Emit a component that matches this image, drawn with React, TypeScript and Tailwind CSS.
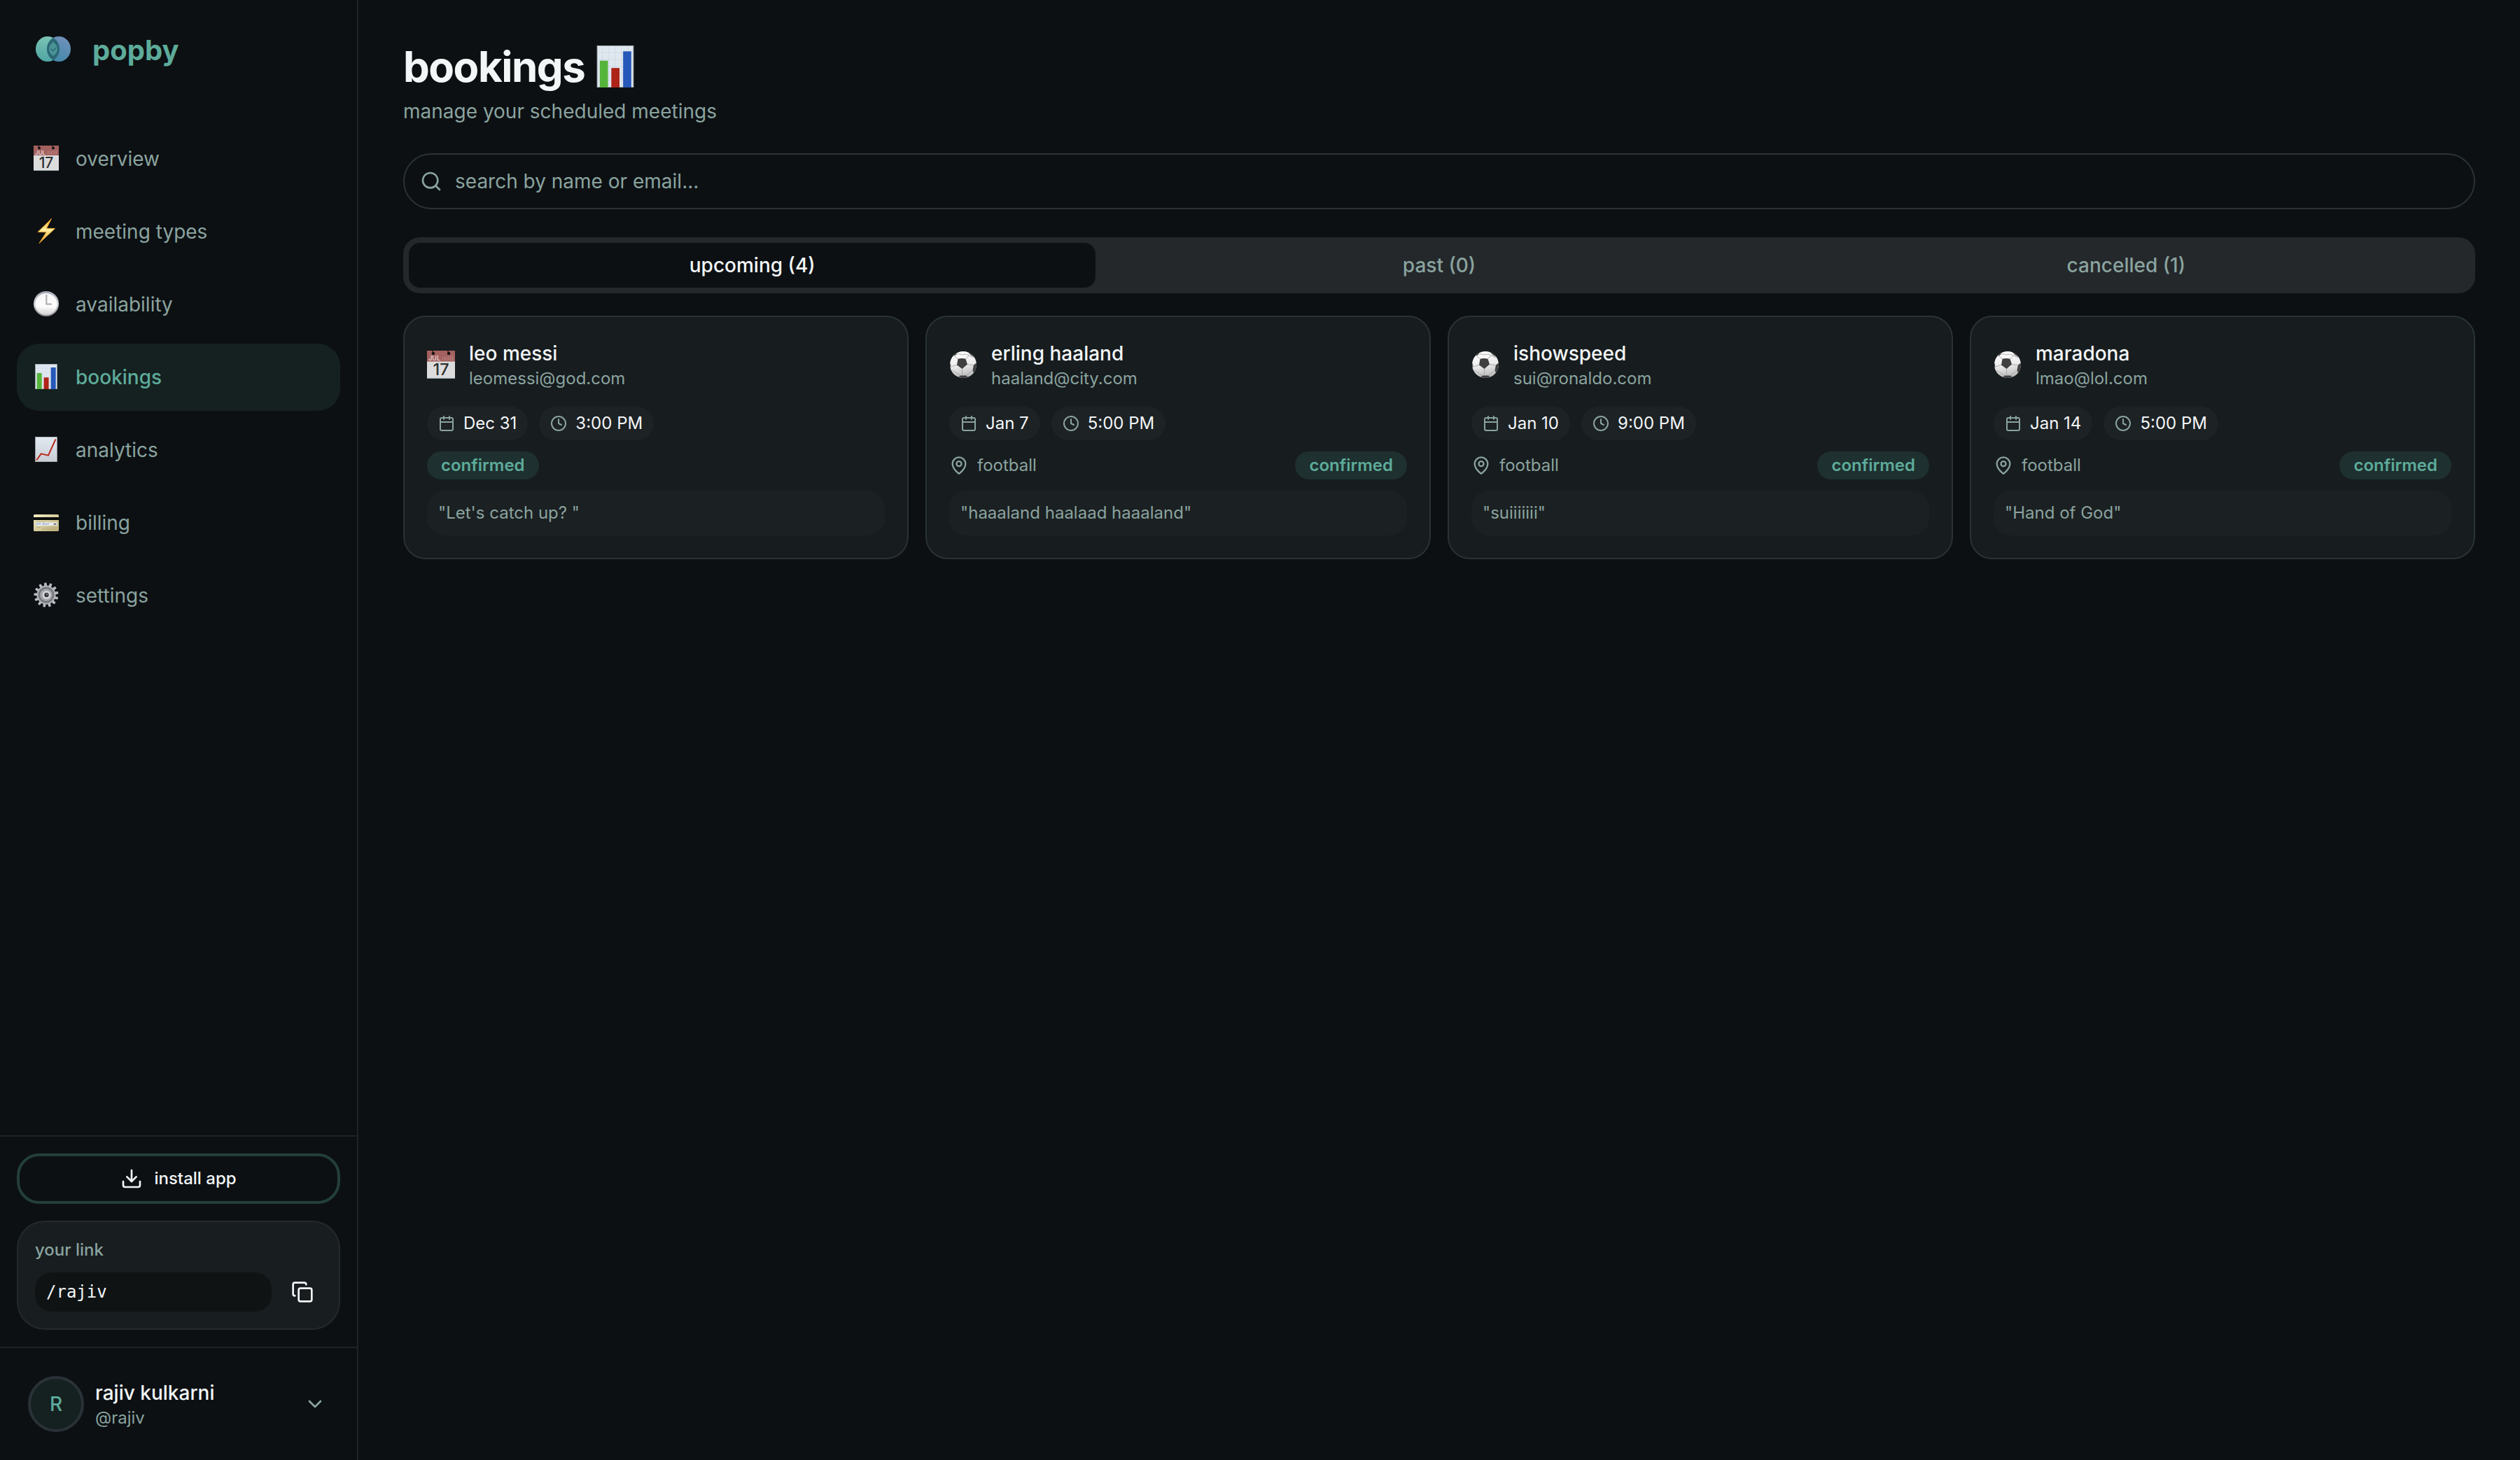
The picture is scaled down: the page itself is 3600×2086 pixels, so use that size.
import { useState } from "react";
import type { ReactNode } from "react";
import { Calendar, ChevronDown, Clock, Copy, Download, MapPin, Search } from "lucide-react";

type Status = "upcoming" | "past" | "cancelled";

interface Booking {
  name: string;
  email: string;
  icon: "calendar" | "football";
  date: string;
  time: string;
  location?: string;
  note: string;
  status: Status;
}

const bookings: Booking[] = [
  {
    name: "leo messi",
    email: "leomessi@god.com",
    icon: "calendar",
    date: "Dec 31",
    time: "3:00 PM",
    note: "Let's catch up? ",
    status: "upcoming",
  },
  {
    name: "erling haaland",
    email: "haaland@city.com",
    icon: "football",
    date: "Jan 7",
    time: "5:00 PM",
    location: "football",
    note: "haaaland haalaad haaaland",
    status: "upcoming",
  },
  {
    name: "ishowspeed",
    email: "sui@ronaldo.com",
    icon: "football",
    date: "Jan 10",
    time: "9:00 PM",
    location: "football",
    note: "suiiiiiii",
    status: "upcoming",
  },
  {
    name: "maradona",
    email: "lmao@lol.com",
    icon: "football",
    date: "Jan 14",
    time: "5:00 PM",
    location: "football",
    note: "Hand of God",
    status: "upcoming",
  },
];

const tabs: { id: Status; count: number }[] = [
  { id: "upcoming", count: 4 },
  { id: "past", count: 0 },
  { id: "cancelled", count: 1 },
];

function Logo() {
  return (
    <svg viewBox="0 0 56 56" className="size-14" aria-hidden="true">
      <defs>
        <linearGradient id="logoLeft" x1="0.5" y1="0" x2="0.4" y2="1">
          <stop offset="0" stopColor="#7cc4b6" />
          <stop offset="1" stopColor="#4fa5a3" />
        </linearGradient>
        <linearGradient id="logoRight" x1="0.8" y1="0" x2="0.4" y2="1">
          <stop offset="0" stopColor="#7391bb" />
          <stop offset="1" stopColor="#4389a9" />
        </linearGradient>
        <clipPath id="logoClip">
          <ellipse cx="20" cy="26" rx="17" ry="18" />
        </clipPath>
      </defs>
      <ellipse cx="20" cy="26" rx="17" ry="18" fill="url(#logoLeft)" />
      <ellipse cx="36" cy="26" rx="17" ry="18" fill="url(#logoRight)" />
      <ellipse cx="36" cy="26" rx="17" ry="18" fill="#2b6874" clipPath="url(#logoClip)" />
      <path d="M28 16c4 3 6 6.500 6 10s-2 7-6 10c-4-3-6-6.500-6-10s2-7 6-10z" fill="#4a9496" />
      <path d="m24.800 26 2.700 2.800 4.500-4.600" fill="none" stroke="#2a6470" strokeWidth="1.300" strokeLinecap="round" />
    </svg>
  );
}

function CalendarEmoji() {
  return (
    <svg viewBox="0 0 36 36" className="size-full" aria-hidden="true">
      <rect width="36" height="36" fill="#dcdcdc" />
      <rect width="36" height="14" fill="#a3615f" />
      <rect y="35" width="36" height="1" fill="#9db0ad" />
      <circle cx="8" cy="3.500" r="2" fill="#161213" />
      <circle cx="28" cy="3.500" r="2" fill="#161213" />
      <path d="M8 3 7 0M28 3l-1.500-3" stroke="#161213" strokeWidth="1" />
      <text x="2" y="12.500" fontSize="8" fontWeight="600" fill="#e3cfce" fontFamily="Inter, sans-serif">
        JUL
      </text>
      <path
        d="M20.500 8v4.500M23 7.500v5M25.500 8v4.500M28 7.500v5M30.500 7v5.500M33 6.500v6"
        stroke="#b98483"
        strokeWidth="1"
      />
      <text x="18" y="31.500" fontSize="21" textAnchor="middle" fontWeight="500" fill="#2f302f" fontFamily="Inter, sans-serif">
        17
      </text>
    </svg>
  );
}

function BoltEmoji() {
  return (
    <svg viewBox="0 0 36 36" className="size-full" aria-hidden="true">
      <defs>
        <linearGradient id="bolt" x1="0.5" y1="0" x2="0.5" y2="1">
          <stop offset="0" stopColor="#f3a92c" />
          <stop offset="0.45" stopColor="#fff0a0" />
          <stop offset="1" stopColor="#e8961f" />
        </linearGradient>
      </defs>
      <path d="M25.500.500 6 19.500l12.200.2L8 35.500 30.500 14.500l-12-.2z" fill="url(#bolt)" stroke="#e9a02c" strokeWidth="1" />
    </svg>
  );
}

function ClockEmoji() {
  return (
    <svg viewBox="0 0 36 36" className="size-full" aria-hidden="true">
      <defs>
        <linearGradient id="clockRim" x1="0" y1="0" x2="0" y2="1">
          <stop offset="0" stopColor="#a3a6b4" />
          <stop offset="0.5" stopColor="#d5d6dc" />
          <stop offset="1" stopColor="#8d8d91" />
        </linearGradient>
        <linearGradient id="clockFace" x1="0" y1="0" x2="0" y2="1">
          <stop offset="0" stopColor="#f6f6f7" />
          <stop offset="0.6" stopColor="#fdfdfd" />
          <stop offset="1" stopColor="#d2d2d4" />
        </linearGradient>
      </defs>
      <circle cx="18" cy="18" r="18" fill="url(#clockRim)" />
      <circle cx="18" cy="18.500" r="15.500" fill="url(#clockFace)" />
      <path d="M18.300 5v13.500H26" fill="none" stroke="#ababae" strokeWidth="2" />
    </svg>
  );
}

function BarsEmoji() {
  return (
    <svg viewBox="0 0 36 36" className="size-full" aria-hidden="true">
      <rect x="2.500" y="0.300" width="31" height="35.500" fill="#dfe7ef" stroke="#a9b0b8" strokeWidth="0.600" />
      <path
        d="M7 .5v35M12.500.500v35M18 .5v35M23.500.500v35M29 .5v35M3 6h30M3 12h30M3 18h30M3 24h30M3 30h30"
        stroke="#cbd7e3"
        strokeWidth="0.400"
      />
      <rect x="4.700" y="13" width="7" height="23" fill="#55b53b" />
      <rect x="14.600" y="19.300" width="7" height="16.700" fill="#ae2318" />
      <rect x="24.700" y="5" width="7" height="31" fill="#2558b8" />
    </svg>
  );
}

function TrendEmoji() {
  return (
    <svg viewBox="0 0 36 36" className="size-full" aria-hidden="true">
      <defs>
        <linearGradient id="trend" x1="0" y1="0" x2="0" y2="1">
          <stop offset="0" stopColor="#e2e9f1" />
          <stop offset="1" stopColor="#c8ced4" />
        </linearGradient>
      </defs>
      <rect x="2.500" y="0.300" width="31" height="35.500" fill="url(#trend)" stroke="#a9b0b8" strokeWidth="0.600" />
      <path d="m4.200 33.500 6.500-9.200 10.300 2.400L31.500 3.500" fill="none" stroke="#ba2a20" strokeWidth="2" />
    </svg>
  );
}

function CardEmoji() {
  return (
    <svg viewBox="0 0 36 36" className="size-full" aria-hidden="true">
      <defs>
        <linearGradient id="card" x1="0" y1="0" x2="1" y2="1">
          <stop offset="0" stopColor="#f5edc4" />
          <stop offset="1" stopColor="#b9ac78" />
        </linearGradient>
      </defs>
      <rect y="7" width="36" height="24" rx="1.500" fill="url(#card)" />
      <rect y="11" width="36" height="4" fill="#0b0b0a" />
      <rect x="3" y="18.500" width="31" height="4.500" fill="#e8ebf2" />
      <path
        d="M4 22c1.500-3 2-2.500 2.500-1.500s1.500 0 2-.5 1.500 1 2 .5M13 22c1-4 2-2.500 2-1.500s1.500 1 2 0 1 1.500 2 .5 1.500 0 3-1.500"
        fill="none"
        stroke="#5577bb"
        strokeWidth="0.800"
      />
      <path d="M28.500 20.800h4" stroke="#4a4a4a" strokeWidth="1.500" />
      <path d="M3 17.200h14M4 25.500h6M12 26.500h20M12 28.500h20" stroke="#b1a777" strokeWidth="0.700" />
    </svg>
  );
}

function GearEmoji() {
  return (
    <svg viewBox="0 0 36 36" className="size-full" aria-hidden="true">
      <g fill="#b9bcc3">
        {Array.from({ length: 13 }, (_, i) => (
          <path key={i} d="M15.800 6.500 16.400.500h3.200l.6 6z" transform={`rotate(${(i * 360) / 13 - 4} 18 18)`} />
        ))}
      </g>
      <circle cx="18" cy="18" r="13.500" fill="#b0b3ba" />
      <circle cx="18" cy="18" r="11.500" fill="#7b7d82" />
      <circle cx="18" cy="18" r="9.500" fill="#a2a4a9" stroke="#66686c" strokeWidth="1" />
      <circle cx="18.500" cy="18" r="6" fill="#d4d6db" />
      <circle cx="18.500" cy="18" r="3.200" fill="#33363c" />
      <circle cx="19" cy="17" r="1" fill="#9da0a8" />
    </svg>
  );
}

function FootballEmoji() {
  return (
    <svg viewBox="0 0 40 40" className="size-full" aria-hidden="true">
      <defs>
        <linearGradient id="ball" x1="0.4" y1="0" x2="0.6" y2="1">
          <stop offset="0" stopColor="#ffffff" />
          <stop offset="0.5" stopColor="#ececec" />
          <stop offset="1" stopColor="#b4b4b4" />
        </linearGradient>
        <clipPath id="ballClip">
          <circle cx="20" cy="20" r="19" />
        </clipPath>
      </defs>
      <circle cx="20" cy="20" r="19" fill="url(#ball)" />
      <g clipPath="url(#ballClip)" fill="#404040">
        <path d="M12.500 11.800c3.500-1 7.500-1 11 0L26 19.500 18.500 26 11 20.500z" />
        <path d="M26 1.500c4 .8 8 4 9.500 7.500L31 6.500z" />
        <path d="M39 17.500 35 20.500 33.500 28l1.500 4 5-6z" />
        <path d="m13.500 37 2.500-1.500h8l2.500 1.500-6.500 3z" />
        <path d="m.500 17 1.700 3-.2 6.500L0 24z" />
        <path d="m7 5.500 4-3-1 3-3 2.500z" />
      </g>
      <path
        d="M12.500 11.800 8 8M23.500 11.800 28.500 7M26 19.500l8.500 1.500M18.500 26v9.500M11 20.500 2.200 23M10 5.500C13 4 17 5 18.500 6c3-1.500 7-1 10 1M28.500 7l6.500 3M33.500 28 24 35.500M4 28l12 7.500"
        fill="none"
        stroke="#a4a4a4"
        strokeWidth="0.900"
      />
    </svg>
  );
}

const navItems: { label: string; icon: ReactNode }[] = [
  { label: "overview", icon: <CalendarEmoji /> },
  { label: "meeting types", icon: <BoltEmoji /> },
  { label: "availability", icon: <ClockEmoji /> },
  { label: "bookings", icon: <BarsEmoji /> },
  { label: "analytics", icon: <TrendEmoji /> },
  { label: "billing", icon: <CardEmoji /> },
  { label: "settings", icon: <GearEmoji /> },
];

function Sidebar() {
  return (
    <aside className="sticky top-0 flex h-screen w-[512px] shrink-0 flex-col border-r-2 border-[#1e2326]">
      <a href="#home" className="flex items-center gap-7 px-12 py-11">
        <Logo />
        <span className="text-[40px] leading-[56px] font-bold text-[#5dab9a]">popby</span>
      </a>
      <nav className="flex flex-1 flex-col gap-2 px-6 pt-[35px]">
        {navItems.map((item) => (
          <a
            key={item.label}
            href={`#${item.label}`}
            className={
              item.label === "bookings"
                ? "flex h-24 items-center gap-6 rounded-[32px] bg-[#152120] px-6 text-[28px] font-medium text-[#5dab9a]"
                : "flex h-24 items-center gap-6 rounded-[32px] px-6 text-[28px] text-[#8aa39f]"
            }>
            <span className="mb-0.5 size-9">{item.icon}</span>
            {item.label}
          </a>
        ))}
      </nav>

      <div className="flex flex-col gap-6 border-t-2 border-[#1e2326] p-6">
        <button className="flex h-[72px] items-center justify-center gap-4 rounded-[32px] border-4 border-[#233f3a] text-[24px] font-medium text-[#f3f6f7]">
          <Download className="size-8" />
          install app
        </button>
        <div className="rounded-[40px] border-2 border-[#24292c] bg-[#181d1f] p-6">
          <p className="mb-4 text-[24px] leading-8 font-medium text-[#8aa39f]">your link</p>
          <div className="flex items-center gap-4">
            <code className="flex-1 rounded-3xl bg-[#0f1314] px-4 py-3 font-['DejaVu_Sans_Mono',monospace] text-[24px] leading-8 text-[#f3f6f7]">
              /rajiv
            </code>
            <button aria-label="Copy link" className="flex size-14 items-center justify-center text-[#f3f6f7]">
              <Copy className="size-8" />
            </button>
          </div>
        </div>
      </div>

      <div className="border-t-2 border-[#1e2326] p-6">
        <button className="flex w-full items-center gap-4 py-4 pr-5 pl-4 text-left">
          <span className="flex size-20 items-center justify-center rounded-full border-4 border-[#2a3237] bg-[#152120] text-[28px] font-medium text-[#5dab9a]">
            R
          </span>
          <span className="flex flex-1 flex-col">
            <span className="text-[28px] leading-10 font-medium text-[#f3f6f7]">rajiv kulkarni</span>
            <span className="text-[24px] leading-8 text-[#8aa39f]">@rajiv</span>
          </span>
          <ChevronDown className="size-8 text-[#8aa39f]" />
        </button>
      </div>
    </aside>
  );
}

function BookingCard({ booking }: { booking: Booking }) {
  return (
    <article className="flex flex-col gap-4 rounded-[32px] border-2 border-[#2a3236] bg-[#171c1e] p-8">
      <div className="mb-2 flex items-center gap-5">
        <span className="size-10">{booking.icon === "calendar" ? <CalendarEmoji /> : <FootballEmoji />}</span>
        <div>
          <h3 className="text-[28px] leading-10 font-medium text-[#f3f6f7]">{booking.name}</h3>
          <p className="text-[24px] leading-8 text-[#8aa39f]">{booking.email}</p>
        </div>
      </div>
      <div className="flex gap-4">
        <span className="flex items-center gap-3 rounded-3xl bg-[#1d2225] px-4 py-2 text-[24px] leading-8 text-[#f3f6f7]">
          <Calendar className="size-6 text-[#8aa39f]" />
          {booking.date}
        </span>
        <span className="flex items-center gap-3 rounded-3xl bg-[#1d2225] px-4 py-2 text-[24px] leading-8 text-[#f3f6f7]">
          <Clock className="size-6 text-[#8aa39f]" />
          {booking.time}
        </span>
      </div>
      <div className="flex items-center justify-between">
        {booking.location && (
          <span className="flex items-center gap-3 text-[24px] leading-8 text-[#8aa39f]">
            <MapPin className="size-7" />
            {booking.location}
          </span>
        )}
        <span className="rounded-full bg-[#1e302f] px-5 py-1 text-[24px] leading-8 font-semibold text-[#5dab9a]">
          confirmed
        </span>
      </div>
      <p className="rounded-3xl bg-[#1b2022] p-4 text-[24px] leading-8 text-[#8aa39f]">"{booking.note}"</p>
    </article>
  );
}

export default function App() {
  const [activeTab, setActiveTab] = useState<Status>("upcoming");
  const [query, setQuery] = useState("");

  const visible = bookings.filter(
    (b) => b.status === activeTab && `${b.name} ${b.email}`.toLowerCase().includes(query.toLowerCase())
  );

  return (
    <div className="flex min-h-screen bg-[#0c1013] font-[Inter,sans-serif]">
      <Sidebar />
      <main className="min-w-0 flex-1 px-16 pt-[59px] pb-16">
        <h1 className="flex items-center gap-3.5 text-[60px] leading-[72px] font-bold tracking-tight text-[#f3f6f7]">
          bookings
          <span className="size-[60px]">
            <BarsEmoji />
          </span>
        </h1>
        <p className="mt-2 text-[28px] leading-10 text-[#8aa39f]">manage your scheduled meetings</p>

        <div className="relative mt-10">
          <Search className="absolute top-6 left-6 size-8 text-[#8aa39f]" />
          <input
            type="text"
            aria-label="search bookings"
            value={query}
            onChange={(e) => setQuery(e.target.value)}
            placeholder="search by name or email..."
            className="block h-20 w-full rounded-[40px] border-2 border-[#2a3236] bg-transparent pr-6 pl-[72px] text-[28px] text-[#f3f6f7] placeholder:text-[#8aa39f]"
          />
        </div>

        <div role="tablist" className="mt-10 grid h-20 grid-cols-3 rounded-3xl bg-[#24282b] p-2">
          {tabs.map((tab) => (
            <button
              key={tab.id}
              role="tab"
              aria-selected={activeTab === tab.id}
              onClick={() => setActiveTab(tab.id)}
              className={
                activeTab === tab.id
                  ? "rounded-2xl bg-[#0c1013] text-[28px] font-medium text-[#f3f6f7]"
                  : "rounded-2xl text-[28px] font-medium text-[#8aa39f]"
              }>
              {tab.id} ({tab.count})
            </button>
          ))}
        </div>

        <div className="mt-8 grid grid-cols-4 gap-6">
          {visible.map((booking) => (
            <BookingCard key={booking.email} booking={booking} />
          ))}
        </div>
      </main>
    </div>
  );
}
